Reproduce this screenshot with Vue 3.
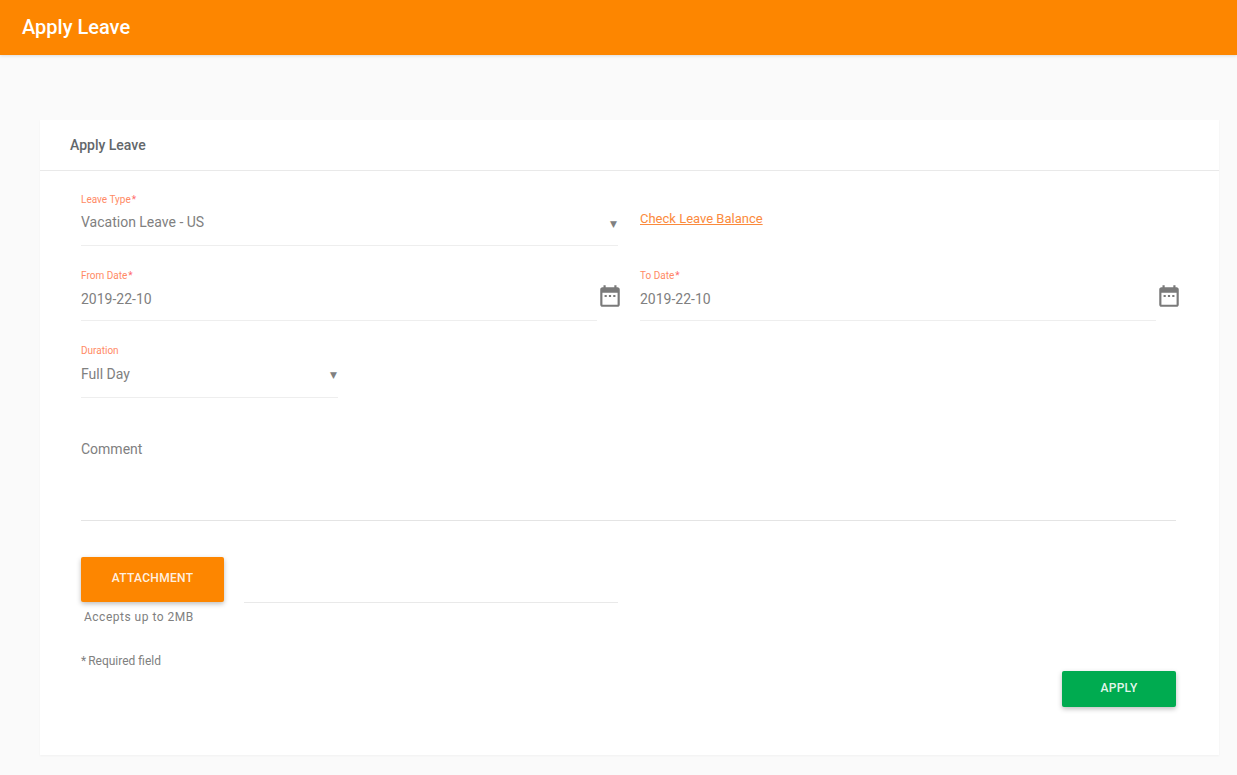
<script setup>
const calPath = 'M19 4h-1V2h-2v2H8V2H6v2H5C3.9 4 3 4.9 3 6v14c0 1.1.9 2 2 2h14c1.1 0 2-.9 2-2V6c0-1.1-.9-2-2-2zm0 16H5V9h14v11zM7 11h2v2H7zm4 0h2v2h-2zm4 0h2v2h-2z'
</script>

<template>
  <div class="page">
    <header class="topbar">Apply Leave</header>
    <main class="content">
      <section class="card">
        <h2 class="card-title">Apply Leave</h2>
        <form class="form" @submit.prevent>
          <div class="row row-type">
            <div class="field col-half">
              <label class="label">Leave Type<span class="star">*</span></label>
              <div class="value">Vacation Leave - US<span class="arrow">▼</span></div>
            </div>
            <a class="balance" href="#">Check Leave Balance</a>
          </div>

          <div class="row row-dates">
            <div class="date-col">
              <div class="field grow">
                <label class="label">From Date<span class="star">*</span></label>
                <div class="value">2019-22-10</div>
              </div>
              <svg class="cal" viewBox="0 0 24 24" width="26" height="26"><path :d="calPath" /></svg>
            </div>
            <div class="date-col">
              <div class="field grow">
                <label class="label">To Date<span class="star">*</span></label>
                <div class="value">2019-22-10</div>
              </div>
              <svg class="cal" viewBox="0 0 24 24" width="26" height="26"><path :d="calPath" /></svg>
            </div>
          </div>

          <div class="field duration">
            <label class="label">Duration</label>
            <div class="value">Full Day<span class="arrow">▼</span></div>
          </div>

          <div class="comment">Comment</div>

          <div class="attach-row">
            <button class="btn btn-orange" type="button">ATTACHMENT</button>
            <div class="attach-line"></div>
          </div>
          <p class="hint">Accepts up to 2MB</p>

          <div class="foot">
            <p class="required"><span class="req-star">*</span>Required field</p>
            <button class="btn btn-green" type="submit">APPLY</button>
          </div>
        </form>
      </section>
    </main>
  </div>
</template>

<style>
html, body { margin: 0; background: #fafafa; }
</style>

<style scoped>
.page {
  height: 775px;
  overflow: hidden;
  background: #fafafa;
  font-family: Roboto, "Liberation Sans", sans-serif;
  color: #808080;
}
.topbar {
  height: 55px;
  box-sizing: border-box;
  padding-left: 22px;
  background: #fd8600;
  color: #fff;
  font-size: 20px;
  font-weight: 500;
  line-height: 54px;
  box-shadow: 0 1px 3px rgba(0, 0, 0, 0.12);
}
.content { padding: 65px 18px 0 40px; }
.card {
  height: 635px;
  background: #fff;
  box-shadow: 0 1px 2px rgba(0, 0, 0, 0.04);
}
.card-title {
  margin: 0;
  height: 51px;
  box-sizing: border-box;
  padding-left: 30px;
  border-bottom: 1px solid #e9e9e9;
  font-size: 14px;
  font-weight: 500;
  line-height: 50px;
  color: #63676b;
}
.form { padding: 0 43px 0 41px; }
.row { display: flex; }
.row-type { padding-top: 22px; gap: 22px; }
.col-half { width: 537px; }
.field { border-bottom: 1px solid #eeeeee; }
.label {
  display: block;
  height: 13px;
  font-size: 10px;
  line-height: 13px;
  color: #ff8a65;
}
.star { color: #ff6b6b; margin-left: 1px; }
.value {
  position: relative;
  height: 39px;
  padding-top: 6px;
  box-sizing: border-box;
  font-size: 14px;
  line-height: 20px;
  color: #808080;
}
.arrow {
  position: absolute;
  right: 1px;
  top: 10px;
  font-size: 9px;
  line-height: 16px;
  font-family: "DejaVu Sans", sans-serif;
}
.balance {
  font-size: 13px;
  line-height: 16px;
  margin-top: 18px;
  height: 16px;
  color: #fb8a3c;
  text-decoration: underline;
}
.row-dates { margin-top: 23px; gap: 20px; width: 1098px; }
.date-col { display: flex; width: 539px; }
.grow { flex: 1; height: 51px; }
.cal {
  flex: none;
  margin: 14px -3px 0 0;
  fill: #7a7a7a;
}
.date-col .value { height: 37px; padding-top: 7px; }
.duration { margin-top: 23px; width: 257px; box-sizing: border-box; height: 54px; }
.duration .value { padding-top: 7px; }
.comment {
  margin-top: 42px;
  height: 81px;
  box-sizing: border-box;
  border-bottom: 1px solid #e4e4e4;
  font-size: 14px;
  line-height: 18px;
}
.attach-row { display: flex; align-items: flex-end; margin-top: 36px; }
.btn {
  border: none;
  border-radius: 2px;
  color: rgba(255, 255, 255, 0.9);
  font-family: inherit;
  font-size: 12px;
  font-weight: 500;
  letter-spacing: 0.3px;
  box-shadow: 0 2px 5px rgba(0, 0, 0, 0.26);
  padding: 0 0 2px;
}
.btn-orange { width: 143px; height: 45px; padding-bottom: 4px; background: #fd8600; }
.attach-line {
  width: 374px;
  margin: 0 0 -1px 20px;
  border-bottom: 1px solid #e9e9e9;
}
.hint {
  margin: 7px 0 0 3px;
  font-size: 12px;
  line-height: 16px;
  letter-spacing: 0.5px;
}
.foot { display: flex; justify-content: space-between; align-items: flex-start; margin-top: 28px; }
.required { margin: 0; font-size: 12px; line-height: 16px; }
.req-star { margin-right: 2px; }
.btn-green { width: 114px; height: 36px; margin-top: 18px; background: #00ab50; }
</style>
